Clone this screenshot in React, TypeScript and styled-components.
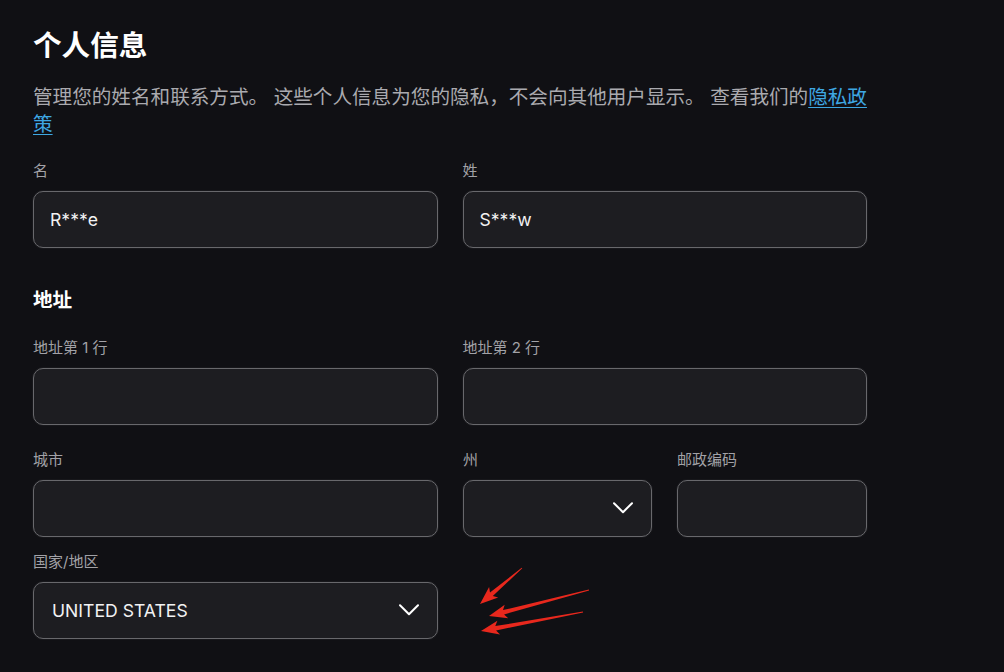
import React from "react";
import styled, { createGlobalStyle } from "styled-components";

const Global = createGlobalStyle`
  html, body { margin: 0; padding: 0; background: #101014; }
  body { font-family: Inter, "Noto Sans CJK SC", sans-serif; color: #f4f4f5; }
`;

const Page = styled.div`
  position: relative;
  width: 1004px;
  height: 672px;
  overflow: hidden;
  background: #101014;
  box-sizing: border-box;
  padding: 26px 0 0 33px;
`;

const Content = styled.div`
  width: 834px;
  display: flex;
  flex-direction: column;
`;

const Title = styled.h1`
  margin: 0;
  font-size: 28.6px;
  line-height: 40px;
  font-weight: 700;
  color: #ffffff;
`;

const Description = styled.p`
  margin: 17.5px 0 0;
  width: 848px;
  font-size: 19.6px;
  line-height: 27px;
  color: #aaaaaf;
`;

const Link = styled.a`
  color: #3ea7e2;
  text-decoration: underline;
  text-underline-offset: 3px;
`;

const SectionTitle = styled.h2`
  margin: 38px 0 0;
  font-size: 19.6px;
  line-height: 28px;
  font-weight: 700;
  color: #ffffff;
`;

const Row = styled.div<{ $cols: string; $mt: number }>`
  display: grid;
  grid-template-columns: ${(p) => p.$cols};
  column-gap: 25px;
  margin-top: ${(p) => p.$mt}px;
`;

const Field = styled.div`
  display: flex;
  flex-direction: column;
`;

const Label = styled.label`
  font-size: 15px;
  line-height: 20px;
  color: #a2a2a7;
  margin-bottom: 10px;
`;

const Box = styled.div<{ $pad: number }>`
  height: 57px;
  box-sizing: border-box;
  border: 1px solid #68686c;
  border-radius: 10px;
  background: #1d1d21;
  box-shadow: 0 0 0 1px #17171b;
  display: flex;
  align-items: center;
  justify-content: space-between;
  padding: 0 18px 0 ${(p) => p.$pad}px;
  font-size: 17.6px;
  color: #f2f2f3;
`;

const Value = styled.span`
  font-weight: 400;
`;

const Chevron = () => (
  <svg width="20" height="12" viewBox="0 0 20 12" fill="none">
    <path d="M1 1.2 L10 10.2 L19 1.2" stroke="#ffffff" strokeWidth="2" strokeLinecap="round" strokeLinejoin="round" />
  </svg>
);

const Overlay = styled.svg`
  position: absolute;
  left: 0;
  top: 0;
  pointer-events: none;
`;

function arrowPoints(x1: number, y1: number, x2: number, y2: number) {
  const dx = x2 - x1;
  const dy = y2 - y1;
  const len = Math.hypot(dx, dy);
  const ux = dx / len;
  const uy = dy / len;
  const nx = -uy;
  const ny = ux;
  const h = 15;
  const bx = x2 - ux * h;
  const by = y2 - uy * h;
  const pts: [number, number][] = [
    [x1 + nx * 0.4, y1 + ny * 0.4],
    [bx + nx * 2.2, by + ny * 2.2],
    [bx - ux * 3 + nx * 7, by - uy * 3 + ny * 7],
    [x2, y2],
    [bx - ux * 3 - nx * 7, by - uy * 3 - ny * 7],
    [bx - nx * 2.2, by - ny * 2.2],
    [x1 - nx * 0.4, y1 - ny * 0.4],
  ];
  return pts.map((p) => p.map((v) => v.toFixed(1)).join(",")).join(" ");
}

const arrows = [
  [522, 568, 480, 604],
  [589, 590, 489, 616],
  [583, 612, 481, 631],
];

export default function App() {
  return (
    <>
      <Global />
      <Page>
        <Content>
          <Title>个人信息</Title>
          <Description>
            管理您的姓名和联系方式。 这些个人信息为您的隐私，不会向其他用户显示。 查看我们的
            <Link href="#">隐私政策</Link>
          </Description>
          <Row $cols="1fr 1fr" $mt={23.5}>
            <Field>
              <Label>名</Label>
              <Box $pad={16}>
                <Value>R***e</Value>
              </Box>
            </Field>
            <Field>
              <Label>姓</Label>
              <Box $pad={16}>
                <Value>S***w</Value>
              </Box>
            </Field>
          </Row>
          <SectionTitle>地址</SectionTitle>
          <Row $cols="1fr 1fr" $mt={24}>
            <Field>
              <Label>地址第 1 行</Label>
              <Box $pad={16} />
            </Field>
            <Field>
              <Label>地址第 2 行</Label>
              <Box $pad={16} />
            </Field>
          </Row>
          <Row $cols="405px 189px 190px" $mt={24.5}>
            <Field>
              <Label>城市</Label>
              <Box $pad={16} />
            </Field>
            <Field>
              <Label>州</Label>
              <Box $pad={16}>
                <span />
                <Chevron />
              </Box>
            </Field>
            <Field>
              <Label>邮政编码</Label>
              <Box $pad={16} />
            </Field>
          </Row>
          <Row $cols="405px" $mt={15}>
            <Field>
              <Label>国家/地区</Label>
              <Box $pad={18}>
                <Value>UNITED STATES</Value>
                <Chevron />
              </Box>
            </Field>
          </Row>
        </Content>
        <Overlay width="1004" height="672" viewBox="0 0 1004 672">
          {arrows.map((a, i) => (
            <polygon key={i} points={arrowPoints(a[0], a[1], a[2], a[3])} fill="#e8281d" />
          ))}
        </Overlay>
      </Page>
    </>
  );
}
